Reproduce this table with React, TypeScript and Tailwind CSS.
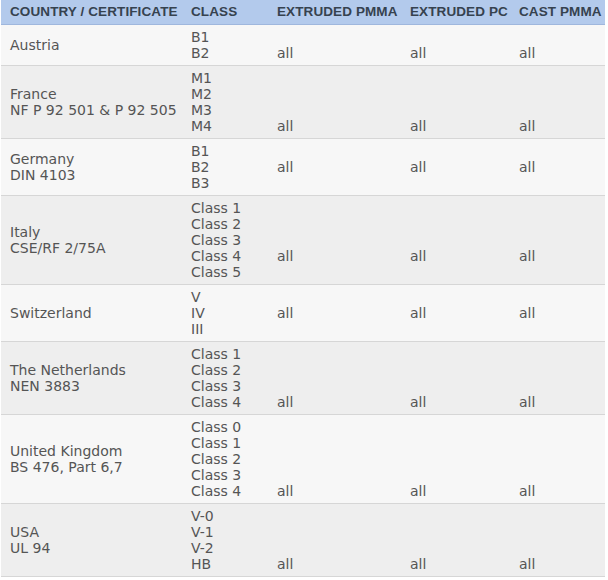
type Row = {
  country: string[];
  classes: string[];
  allLine: number;
};

const rows: Row[] = [
  { country: ['Austria'], classes: ['B1', 'B2'], allLine: 1 },
  { country: ['France', 'NF P 92 501 & P 92 505'], classes: ['M1', 'M2', 'M3', 'M4'], allLine: 3 },
  { country: ['Germany', 'DIN 4103'], classes: ['B1', 'B2', 'B3'], allLine: 1 },
  { country: ['Italy', 'CSE/RF 2/75A'], classes: ['Class 1', 'Class 2', 'Class 3', 'Class 4', 'Class 5'], allLine: 3 },
  { country: ['Switzerland'], classes: ['V', 'IV', 'III'], allLine: 1 },
  { country: ['The Netherlands', 'NEN 3883'], classes: ['Class 1', 'Class 2', 'Class 3', 'Class 4'], allLine: 3 },
  { country: ['United Kingdom', 'BS 476, Part 6,7'], classes: ['Class 0', 'Class 1', 'Class 2', 'Class 3', 'Class 4'], allLine: 4 },
  { country: ['USA', 'UL 94'], classes: ['V-0', 'V-1', 'V-2', 'HB'], allLine: 3 },
];

const headers = ['COUNTRY / CERTIFICATE', 'CLASS', 'EXTRUDED PMMA', 'EXTRUDED PC', 'CAST PMMA'];

const AllCell = ({ line }: { line: number }) => (
  <td className="align-top pl-[9px] pt-[4px] pb-[4px]">
    {Array.from({ length: line }).map((_, i) => (
      <div key={i}>&nbsp;</div>
    ))}
    <div>all</div>
  </td>
);

const App = () => {
  return (
    <div className="w-[608px] h-[580px] bg-white">
      <table
        className="ml-px w-[604px] table-fixed border-collapse text-[#555555]"
        style={{ fontFamily: '"DejaVu Sans", Verdana, sans-serif' }}
      >
        <colgroup>
          <col className="w-[181px]" />
          <col className="w-[86px]" />
          <col className="w-[133px]" />
          <col className="w-[109px]" />
          <col />
        </colgroup>
        <thead>
          <tr className="h-[24px] bg-[#b3caec] border-b border-[#9fb7dd]">
            {headers.map((h) => (
              <th
                key={h}
                className="pl-[9px] text-left align-middle text-[13.5px] font-bold whitespace-nowrap text-[#36424f] tracking-[0.1px]"
                style={{ fontFamily: '"Liberation Sans", Arial, sans-serif' }}
              >
                {h}
              </th>
            ))}
          </tr>
        </thead>
        <tbody className="text-[14px] leading-[16px]">
          {rows.map((r, idx) => (
            <tr
              key={r.country[0]}
              className={`border-b border-[#d6d6d6] ${idx % 2 === 0 ? 'bg-[#f7f7f7]' : 'bg-[#eeeeee]'}`}
            >
              <td className="align-middle pl-[9px] pt-[4px] pb-[4px] whitespace-nowrap">
                {r.country.map((c) => (
                  <div key={c}>{c}</div>
                ))}
              </td>
              <td className="align-top pl-[9px] pt-[4px] pb-[4px] whitespace-nowrap">
                {r.classes.map((c) => (
                  <div key={c}>{c}</div>
                ))}
              </td>
              <AllCell line={r.allLine} />
              <AllCell line={r.allLine} />
              <AllCell line={r.allLine} />
            </tr>
          ))}
        </tbody>
      </table>
    </div>
  );
};

export default App;
